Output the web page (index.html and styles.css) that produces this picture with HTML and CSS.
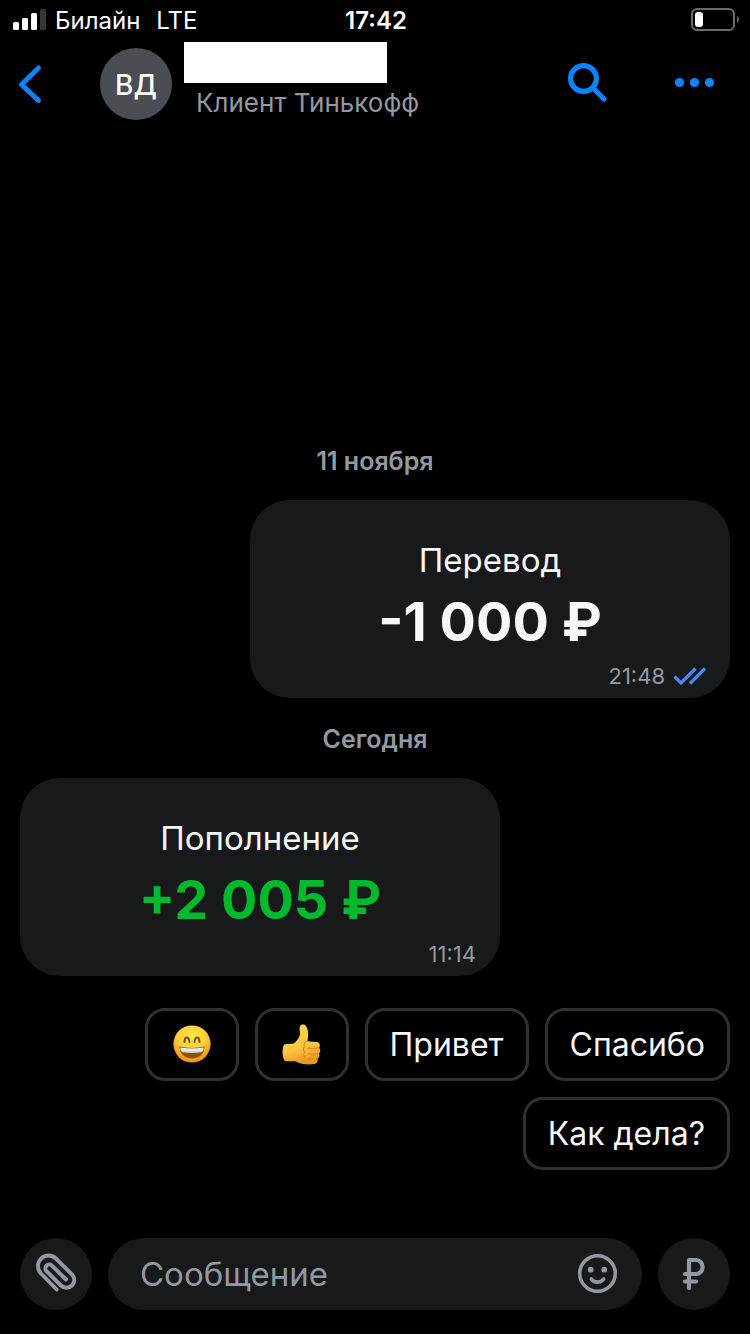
FILE: index.html
```html
<!DOCTYPE html>
<html lang="ru">
<head>
<meta charset="utf-8">
<meta name="viewport" content="width=device-width, initial-scale=1">
<title>Чат</title>
<link rel="stylesheet" href="styles.css">
</head>
<body>
<div class="app">
  <div class="status">
    <div class="status-left">
      <svg class="signal" width="34" height="22" viewBox="0 0 34 22" aria-hidden="true">
        <rect x="0" y="13" width="6" height="8" rx="1.5" fill="#fff"/>
        <rect x="9" y="9" width="6" height="12" rx="1.5" fill="#fff"/>
        <rect x="18" y="4" width="6" height="17" rx="1.5" fill="#fff"/>
        <rect x="27" y="0" width="6" height="21" rx="1.5" fill="#363638"/>
      </svg>
      <span class="carrier">Билайн</span>
      <span>LTE</span>
    </div>
    <time class="clock">17:42</time>
    <div class="status-right">
      <svg width="48" height="24" viewBox="0 0 48 24" aria-hidden="true">
        <rect x="1" y="1" width="42" height="21" rx="5" fill="none" stroke="#6c6c6e" stroke-width="2"/>
        <rect x="4" y="4" width="8" height="15" rx="3" fill="#fff"/>
        <path d="M46 8c2.600 1.500 2.600 5.500 0 7z" fill="#6c6c6e"/>
      </svg>
    </div>
  </div>

  <header class="header">
    <button class="icon-button back" aria-label="Назад">
      <svg width="24" height="40" viewBox="0 0 24 40" fill="none" stroke="#0a84ff" stroke-width="5" stroke-linecap="round" stroke-linejoin="round"><path d="M20.500 4 3.500 20.500 20.500 36.500"/></svg>
    </button>
    <div class="avatar">ВД</div>
    <div class="contact">
      <div class="contact-name"></div>
      <div class="contact-note">Клиент Тинькофф</div>
    </div>
    <button class="icon-button search" aria-label="Поиск">
      <svg width="40" height="40" viewBox="0 0 40 40" fill="none" stroke="#0a84ff" stroke-width="5.200" stroke-linecap="round"><circle cx="15.500" cy="14.500" r="12.900"/><path d="m26 25 10 10"/></svg>
    </button>
    <button class="icon-button" aria-label="Ещё">
      <svg width="40" height="40" viewBox="0 0 40 40" fill="#0a84ff"><circle cx="4.500" cy="18.500" r="4.600"/><circle cx="19.500" cy="18.500" r="4.600"/><circle cx="34.500" cy="18.500" r="4.600"/></svg>
    </button>
  </header>

  <main class="chat">
    <h2 class="day">11 ноября</h2>
    <article class="bubble outgoing">
      <div class="bubble-title">Перевод</div>
      <div class="amount">-1 000 ₽</div>
      <div class="meta">
        <time>21:48</time>
        <svg width="33" height="18" viewBox="0 0 33 18" fill="none" stroke="#428bf9" stroke-width="3.200" aria-hidden="true"><path d="M1.500 9.500 8 16 22.500 1.500M17 16.500 32 1.500"/></svg>
      </div>
    </article>
    <h2 class="day">Сегодня</h2>
    <article class="bubble">
      <div class="bubble-title">Пополнение</div>
      <div class="amount income">+2 005 ₽</div>
      <div class="meta"><time>11:14</time></div>
    </article>

    <div class="replies">
      <button class="reply emoji" aria-label="Улыбка">
        <svg width="40" height="42" viewBox="0 0 40 42">
          <defs>
            <radialGradient id="face" cx=".5" cy=".32" r=".68"><stop offset="0" stop-color="#ffe94f"/><stop offset=".55" stop-color="#ffcf35"/><stop offset="1" stop-color="#f08a16"/></radialGradient>
            <linearGradient id="teeth" x1="0" y1="0" x2="0" y2="1"><stop offset="0" stop-color="#fff"/><stop offset="1" stop-color="#c9d0d8"/></linearGradient>
          </defs>
          <circle cx="20" cy="20" r="18.600" fill="url(#face)"/>
          <path d="M12.500 18c.2-6 4.300-6 5 0M22.500 18c.6-6 4.700-6 5 0" fill="none" stroke="#8b4a0a" stroke-width="2" stroke-linecap="round"/>
          <path d="M7.500 22.500c8 1.900 17 1.900 25 0C32.500 30 27 34.500 20 34.500S7.500 30 7.500 22.500z" fill="#8b5208"/>
          <path d="M8.500 23.500c7.500 1.400 15.500 1.400 23 0 .4 2.700-.8 4.300-2.500 4.700-6 1-12 1-18 0-1.700-.4-2.900-2-2.500-4.700z" fill="url(#teeth)"/>
        </svg>
      </button>
      <button class="reply emoji" aria-label="Нравится">
        <svg width="40" height="42" viewBox="0 0 40 42">
          <defs><linearGradient id="hand" x1="0" y1="0" x2=".3" y2="1"><stop offset="0" stop-color="#ffd64d"/><stop offset=".65" stop-color="#fdc740"/><stop offset="1" stop-color="#e99a24"/></linearGradient></defs>
          <path d="M2 20.500c3.500-.6 7.500-.2 9.500-.9 3-2 6-6 6.600-9.800.3-2.500-1.300-5-.2-7.400 1-2.200 4.500-2.400 6-.4 2.700 3.600 2.700 8.600 1.600 15.300L35 18c2.500 0 4 3.800 2 5.700 2 1.600 1.700 4.600-.2 5.700 1.300 1.900.7 4.400-1.300 5.300.7 2.500-.6 5-3.300 5.300-5 .8-12 .4-15.500-1.300-1.500-.8-3-1.500-5.200-1.500-3 0-6 .5-8.500-.3C-.1 34 0 24 2 20.500z" fill="url(#hand)"/>
          <path d="M37 23.800c-3 .8-8 .8-11 .3M36.800 29.400c-3 .8-7.500.8-10.500.2M35.500 34.700c-2.500.7-6.500.6-9 0M25.500 17.300c-3 .3-4.500 3-2.800 5.200-1.500 1.600-1.500 4 0 5.500-1.200 1.700-1 4 .6 5.200" fill="none" stroke="#d88f26" stroke-width="1.100" stroke-linecap="round"/>
        </svg>
      </button>
      <button class="reply">Привет</button>
      <button class="reply">Спасибо</button>
      <button class="reply">Как дела?</button>
    </div>
  </main>

  <footer class="composer">
    <button class="round" aria-label="Прикрепить">
      <svg width="40" height="40" viewBox="0 0 40 40" fill="none" stroke="#9299a2" stroke-width="3.900" stroke-linecap="round"><path d="M20.700 35.500 5 19.500A10.300 10.300 0 0 1 20 4.700L36 20.500A7.600 7.600 0 0 1 25 31.500L10.300 16.900A3.900 3.900 0 0 1 15.800 11.400L30 25.500"/></svg>
    </button>
    <div class="field">
      <input class="field-input" type="text" placeholder="Сообщение" aria-label="Сообщение">
      <button class="icon-button" aria-label="Эмодзи">
        <svg width="40" height="40" viewBox="0 0 40 40" fill="none" stroke="#9299a2" stroke-width="3.600" stroke-linecap="round"><circle cx="19.500" cy="19.500" r="17.800"/><path d="M13.300 25c3 4.200 9.400 4.200 12.400 0"/><circle cx="12.700" cy="15.700" r="2.900" fill="#9299a2" stroke="none"/><circle cx="26.200" cy="15.700" r="2.900" fill="#9299a2" stroke="none"/></svg>
      </button>
    </div>
    <button class="round" aria-label="Перевести деньги">
      <svg width="24" height="34" viewBox="0 0 24 34" fill="none" stroke="#9299a2" stroke-width="4.200" stroke-linecap="round" stroke-linejoin="round"><path d="M7 31V3h7a6.500 6.500 0 0 1 6.500 6.500v1a6.500 6.500 0 0 1-6.500 6.500H3M3 24.500h11"/></svg>
    </button>
  </footer>
</div>
</body>
</html>
```
FILE: styles.css
```css
* {
  box-sizing: border-box;
}

body {
  margin: 0;
  background: #000;
  color: #f6f7f8;
  font-family: Inter, "Noto Sans", sans-serif;
  font-size: 33px;
}

button,
input {
  font: inherit;
  color: inherit;
  border: 0;
  padding: 0;
  margin: 0;
  background: none;
}

svg {
  display: block;
  overflow: visible;
}

.app {
  display: flex;
  flex-direction: column;
  min-height: 100vh;
}

.status {
  display: grid;
  grid-template-columns: 1fr auto 1fr;
  align-items: center;
  height: 40px;
  padding: 0 11px 0 13px;
  color: #fff;
  font-size: 24px;
}

.status-left {
  display: flex;
  align-items: center;
  gap: 16px;
}

.signal {
  margin-right: -8px;
}

.clock {
  font-weight: 600;
}

.status-right {
  justify-self: end;
}

.header {
  display: flex;
  align-items: center;
  height: 88px;
  padding: 0 35px 0 18px;
}

.icon-button {
  display: flex;
  flex-shrink: 0;
  cursor: pointer;
}

.back {
  margin-right: 58px;
}

.search {
  margin-right: 67px;
}

.avatar {
  display: flex;
  align-items: center;
  justify-content: center;
  flex-shrink: 0;
  width: 72px;
  height: 72px;
  padding-top: 2px;
  border-radius: 50%;
  background: #4a4d52;
  color: #fff;
  font-size: 28px;
  font-weight: 500;
}

.contact {
  flex: 1;
  align-self: flex-start;
  margin-left: 12px;
  padding-top: 2px;
}

.contact-name {
  width: 203px;
  height: 41px;
  background: #fff;
}

.contact-note {
  padding: 4px 0 0 12px;
  color: #9299a2;
  font-size: 26px;
  line-height: 32px;
}

.chat {
  display: flex;
  flex: 1;
  flex-direction: column;
  justify-content: flex-end;
  padding: 0 20px 68px;
}

.day {
  margin: 0;
  padding-top: 2px;
  color: #9299a2;
  font-size: 25px;
  font-weight: 600;
  line-height: 78px;
  text-align: center;
}

.bubble {
  width: 480px;
  max-width: 100%;
  padding: 40px 24px 8px;
  border-radius: 40px;
  background: #18191b;
  text-align: center;
}

.outgoing {
  align-self: flex-end;
}

.bubble-title {
  line-height: 40px;
}

.amount {
  margin: 10px 0 8px;
  font-size: 54px;
  font-weight: 700;
  line-height: 64px;
}

.income {
  color: #00b92d;
}

.meta {
  display: flex;
  align-items: center;
  justify-content: flex-end;
  gap: 8px;
  color: #9299a2;
  font-size: 22px;
  line-height: 28px;
}

.replies {
  display: flex;
  flex-wrap: wrap;
  justify-content: flex-end;
  gap: 16px;
  margin-top: 32px;
}

.reply {
  height: 73px;
  padding: 0 22px;
  border: 3px solid #303032;
  border-radius: 20px;
  font-size: 32px;
  cursor: pointer;
}

.emoji {
  padding: 0 24px;
}

.composer {
  display: flex;
  gap: 16px;
  padding: 0 20px 24px;
}

.round {
  display: flex;
  align-items: center;
  justify-content: center;
  flex-shrink: 0;
  width: 72px;
  height: 72px;
  border-radius: 50%;
  background: #18191b;
  cursor: pointer;
}

.field {
  display: flex;
  align-items: center;
  flex: 1;
  min-width: 0;
  padding: 0 24px 0 32px;
  border-radius: 36px;
  background: #18191b;
}

.field-input {
  flex: 1;
  min-width: 0;
  outline: 0;
}

.field-input::placeholder {
  color: #9299a2;
  opacity: 1;
}
```
